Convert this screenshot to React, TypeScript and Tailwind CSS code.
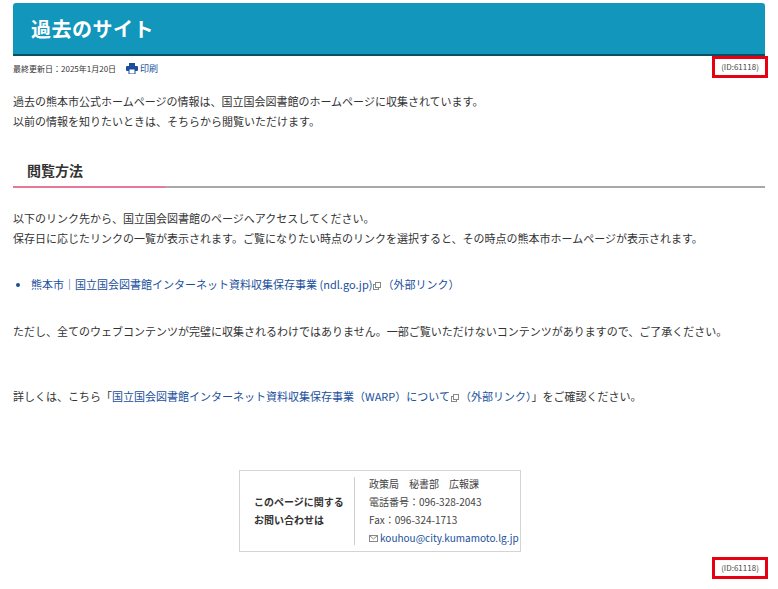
const font = { fontFamily: '"Noto Sans CJK JP", "Noto Sans", sans-serif' };

function IdBox() {
  return (
    <div className="flex justify-end pr-[10px]">
      <div className="border-[3px] border-[#e60012] w-[56px] h-[22px] flex items-center justify-center text-[8px] text-[#444]">
        (ID:61118)
      </div>
    </div>
  );
}

function ExtIcon() {
  return (
    <svg width="8" height="8" viewBox="0 0 8 8" className="inline-block mx-[1px] align-middle">
      <rect x="0.5" y="2.5" width="5" height="5" fill="none" stroke="#888" />
      <rect x="2.5" y="0.5" width="5" height="5" fill="#fff" stroke="#888" />
    </svg>
  );
}

export default function App() {
  return (
    <div className="bg-white w-[778px] h-[589px] overflow-hidden text-[#333]" style={font}>
      <div className="pt-[3px] px-[13px]">
        <div className="h-[53px] bg-[#1296bc] rounded-t-[3px] border-b-[2px] border-[#0b4f66] flex items-center pl-[18px]">
          <h1 className="text-white text-[20px] font-bold tracking-wide">過去のサイト</h1>
        </div>
      </div>
      <div className="flex items-center justify-between">
        <div className="flex items-center pl-[13px] text-[8px] text-[#333] gap-[10px] pt-[3px]">
          <span>最終更新日：2025年1月20日</span>
          <span className="flex items-center gap-[2px] text-[#1a4f9c] text-[9px]">
            <svg width="12" height="11" viewBox="0 0 12 11">
              <rect x="3" y="0" width="6" height="3" fill="#1a4f9c" />
              <rect x="0" y="3" width="12" height="5" rx="1" fill="#1a4f9c" />
              <rect x="3" y="6" width="6" height="5" fill="#fff" stroke="#1a4f9c" />
            </svg>
            印刷
          </span>
        </div>
        <IdBox />
      </div>
      <div className="px-[13px] text-[11px] leading-[20px]">
        <p className="mt-[13px]">過去の熊本市公式ホームページの情報は、国立国会図書館のホームページに収集されています。</p>
        <p>以前の情報を知りたいときは、そちらから閲覧いただけます。</p>
        <div className="mt-[29px] relative border-b-[2px] border-[#a8a8a8] pb-[6px] pl-[14px]">
          <h2 className="text-[14px] font-bold">閲覧方法</h2>
          <div className="absolute left-0 bottom-[-2px] w-[152px] h-[2px] bg-[#e8789a]" />
        </div>
        <p className="mt-[20px]">以下のリンク先から、国立国会図書館のページへアクセスしてください。</p>
        <p>保存日に応じたリンクの一覧が表示されます。ご覧になりたい時点のリンクを選択すると、その時点の熊本市ホームページが表示されます。</p>
        <ul className="mt-[26px] pl-[18px] list-disc">
          <li className="text-[#1a4f9c]">熊本市｜国立国会図書館インターネット資料収集保存事業 (ndl.go.jp)<ExtIcon />（外部リンク）</li>
        </ul>
        <p className="mt-[27px]">ただし、全てのウェブコンテンツが完璧に収集されるわけではありません。一部ご覧いただけないコンテンツがありますので、ご了承ください。</p>
        <p className="mt-[45px]">詳しくは、こちら「<span className="text-[#1a4f9c]">国立国会図書館インターネット資料収集保存事業（WARP）について<ExtIcon />（外部リンク）</span>」をご確認ください。</p>
      </div>
      <div className="flex justify-center mt-[64px] pr-[18px]">
        <div className="w-[282px] h-[82px] border border-[#d4d4d4] flex items-center py-[6px]">
          <div className="w-[115px] h-full border-r border-[#ccc] flex flex-col justify-center pl-[14px] text-[10px] font-bold leading-[18px]">
            <span>このページに関する</span>
            <span>お問い合わせは</span>
          </div>
          <div className="pl-[14px] text-[10px] leading-[18px] text-[#444]">
            <div>政策局　秘書部　広報課</div>
            <div>電話番号：096-328-2043</div>
            <div>Fax：096-324-1713</div>
            <div className="text-[#1a4f9c] flex items-center gap-[2px]">
              <svg width="9" height="7" viewBox="0 0 9 7"><rect x="0.5" y="0.5" width="8" height="6" fill="none" stroke="#888" /><path d="M0.5 0.5 L4.5 4 L8.5 0.5" fill="none" stroke="#888" /></svg>
              kouhou@city.kumamoto.lg.jp
            </div>
          </div>
        </div>
      </div>
      <div className="mt-[5px]"><IdBox /></div>
    </div>
  );
}
